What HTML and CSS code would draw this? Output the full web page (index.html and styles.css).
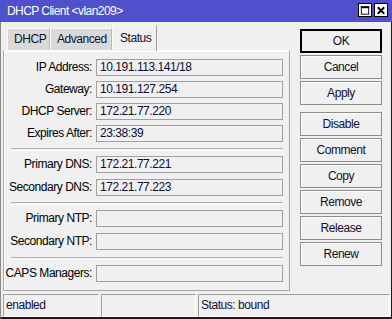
FILE: index.html
```html
<!DOCTYPE html>
<html>
<head>
<meta charset="utf-8">
<link rel="stylesheet" href="styles.css">
</head>
<body>
<div class="window">
  <div class="titlebar">
    <span class="title">DHCP Client &lt;vlan209&gt;</span>
    <div class="tbtns">
      <span class="tbtn"><svg width="13" height="13" viewBox="0 0 13 13"><rect x="2.5" y="2.5" width="8" height="8" fill="none" stroke="#000" stroke-width="1"/><line x1="2" y1="3" x2="11" y2="3" stroke="#000" stroke-width="2"/></svg></span>
      <span class="tbtn"><svg width="13" height="13" viewBox="0 0 13 13"><path d="M3 3 L10 10 M10 3 L3 10" stroke="#000" stroke-width="2"/></svg></span>
    </div>
  </div>
  <div class="main">
    <div class="left">
      <div class="tabs">
        <div class="tab">DHCP</div>
        <div class="tab">Advanced</div>
        <div class="tab active">Status</div>
      </div>
      <div class="panel">
        <div class="group g1">
          <div class="row"><label>IP Address:</label><div class="field">10.191.113.141/18</div></div>
          <div class="row"><label>Gateway:</label><div class="field">10.191.127.254</div></div>
          <div class="row"><label>DHCP Server:</label><div class="field">172.21.77.220</div></div>
          <div class="row"><label>Expires After:</label><div class="field">23:38:39</div></div>
        </div>
        <div class="sep s1"></div>
        <div class="group">
          <div class="row"><label>Primary DNS:</label><div class="field">172.21.77.221</div></div>
          <div class="row"><label>Secondary DNS:</label><div class="field">172.21.77.223</div></div>
        </div>
        <div class="sep s2"></div>
        <div class="group">
          <div class="row"><label>Primary NTP:</label><div class="field"></div></div>
          <div class="row"><label>Secondary NTP:</label><div class="field"></div></div>
        </div>
        <div class="sep s3"></div>
        <div class="group">
          <div class="row"><label>CAPS Managers:</label><div class="field"></div></div>
        </div>
      </div>
    </div>
    <div class="buttons">
      <button class="btn default">OK</button>
      <button class="btn">Cancel</button>
      <button class="btn">Apply</button>
      <button class="btn gap">Disable</button>
      <button class="btn">Comment</button>
      <button class="btn">Copy</button>
      <button class="btn">Remove</button>
      <button class="btn">Release</button>
      <button class="btn">Renew</button>
    </div>
  </div>
  <div class="statusbar">
    <div class="seg seg1">enabled</div>
    <div class="seg seg2"></div>
    <div class="seg seg3">Status: bound</div>
  </div>
</div>
</body>
</html>
```
FILE: styles.css
```css
html, body {
  margin: 0;
  padding: 0;
  background: #f0f0f0;
}
.window {
  width: 392px;
  height: 319px;
  box-sizing: border-box;
  background: #f0f0f0;
  border-right: 1px solid #1a1a1a;
  border-bottom: 2px solid #1a1a1a;
  border-left: 1px solid #8a8a8a;
  font-family: "Liberation Sans", Arial, sans-serif;
  font-size: 12px;
  letter-spacing: -0.45px;
  color: #000;
  display: flex;
  flex-direction: column;
}
.titlebar {
  height: 22px;
  margin-left: -1px;
  margin-right: -1px;
  background: #5050cd;
  display: flex;
  align-items: center;
  justify-content: space-between;
  padding-left: 7px;
  padding-right: 4px;
}
.title {
  color: #fff;
  font-size: 12px;
  letter-spacing: -0.55px;
  line-height: 14px;
}
.tbtns {
  display: flex;
  gap: 2px;
  margin-top: -1px;
}
.tbtn {
  width: 14px;
  height: 14px;
  box-sizing: border-box;
  background: #fff;
  border: 1px solid #000;
  display: flex;
  align-items: center;
  justify-content: center;
}
.tbtn svg { display: block; }
.main {
  display: flex;
  height: 271px;
}
.left {
  margin-left: 2px;
  width: 287px;
  display: flex;
  flex-direction: column;
  padding-top: 3px;
}
.tabs {
  display: flex;
  align-items: flex-end;
  padding-left: 4px;
  height: 25px;
  position: relative;
  z-index: 1;
}
.tab {
  height: 22px;
  box-sizing: border-box;
  background: #d9d9d9;
  border-top: 1px solid #fafafa;
  border-left: 1px solid #fafafa;
  border-right: 1px solid #b8b8b8;
  padding: 0 6px;
  display: flex;
  align-items: center;
  color: #101030;
}
.tab:first-child { width: 43px; }
.tab:nth-child(2) { width: 62px; }
.tab.active {
  height: 26px;
  margin-bottom: -1px;
  width: 45px;
  background: #f0f0f0;
  border-right: 1px solid #a0a0a0;
  align-items: flex-start;
  padding-top: 5px;
  padding-left: 7px;
}
.panel {
  height: 241px;
  box-sizing: border-box;
  border: 1px solid #a8a8a8;
  border-top-color: #fafafa;
  border-left-color: #a8a8a8;
  box-shadow: inset 1px 1px 0 #fff;
  padding-top: 8px;
  padding-right: 6px;
}
.group {
  display: flex;
  flex-direction: column;
  gap: 6px;
}
.g1 { gap: 5px; }
.row {
  display: flex;
  align-items: center;
  height: 17px;
}
.row label {
  width: 88px;
  text-align: right;
  padding-right: 4px;
  white-space: nowrap;
  color: #000;
}
.field {
  width: 187px;
  height: 17px;
  box-sizing: border-box;
  border: 1px solid #a0a0a0;
  background: #f0f0f0;
  padding-left: 3px;
  line-height: 15px;
  color: #0c0c30;
}
.sep {
  height: 1px;
  margin-left: 7px;
  border-top: 1px solid #b0b0b0;
  border-bottom: 1px solid #fff;
}
.s1 { margin-top: 6px; margin-bottom: 5px; }
.s2 { margin-top: 6px; margin-bottom: 5px; }
.s3 { margin-top: 7px; margin-bottom: 5px; }
.buttons {
  margin-left: 10px;
  padding-top: 7px;
  display: flex;
  flex-direction: column;
  gap: 2px;
  width: 82px;
}
.btn {
  width: 82px;
  height: 24px;
  box-sizing: border-box;
  margin: 0;
  padding: 0;
  background: #f0f0f0;
  border: 1px solid #8c8c8c;
  box-shadow: inset 1px 1px 0 #fff;
  font-family: "Liberation Sans", Arial, sans-serif;
  font-size: 12px;
  letter-spacing: -0.45px;
  color: #101030;
}
.btn.default {
  border: 2px solid #000;
  box-shadow: none;
}
.btn.gap { margin-top: 5px; }
.statusbar {
  display: flex;
  gap: 2px;
  margin-left: 2px;
  margin-top: 2px;
  height: 23px;
}
.seg {
  box-sizing: border-box;
  height: 23px;
  border-top: 1px solid #a0a0a0;
  border-left: 1px solid #a0a0a0;
  border-bottom: 1px solid #fff;
  border-right: 1px solid #fff;
  padding-left: 2px;
  line-height: 20px;
  color: #101040;
}
.seg1 { width: 96px; }
.seg2 { width: 95px; }
.seg3 { width: 192px; }
```
